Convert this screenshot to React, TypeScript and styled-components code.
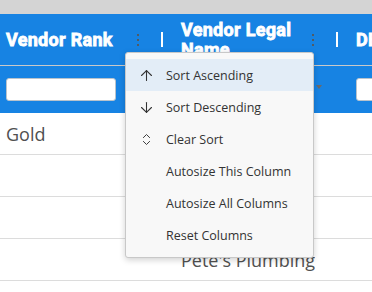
import React from "react";
import styled, { createGlobalStyle } from "styled-components";
import { ArrowUp, ArrowDown, ChevronsUpDown } from "lucide-react";

const Global = createGlobalStyle`
  html, body { margin: 0; padding: 0; background: #fff; }
  body { font-family: "Open Sans", "Noto Sans", sans-serif; }
`;

const Page = styled.div`
  position: relative;
  width: 372px;
  height: 292px;
  overflow: hidden;
  background: #fff;
`;

const TopStrip = styled.div`
  height: 14px;
  background: #d4d4d4;
`;

const GridRow = styled.div`
  display: grid;
  grid-template-columns: 175px 175px 175px;
`;

const HeaderRow = styled(GridRow)`
  height: 51px;
  background: #1783e3;
  border-bottom: 1px solid #c9c9c9;
`;

const HeaderCell = styled.div`
  display: flex;
  align-items: center;
  padding: 0 12px 0 6px;
`;

const HeaderLabel = styled.div`
  flex: 1;
  min-width: 0;
  color: #fff;
  font-family: Roboto, "Liberation Sans", sans-serif;
  font-weight: 700;
  font-size: 18px;
  line-height: 20px;
  letter-spacing: 0.3px;
  -webkit-text-stroke: 0.8px #fff;
  white-space: normal;
`;

const Dots = styled.svg`
  flex: none;
  margin-right: 21px;
`;

const Separator = styled.div`
  flex: none;
  width: 2px;
  height: 15px;
  background: #fff;
`;

const FilterRow = styled(GridRow)`
  height: 47px;
  background: #1783e3;
`;

const FilterCell = styled.div`
  position: relative;
  display: flex;
  align-items: center;
  padding: 0 6px;
`;

const FilterInput = styled.div`
  width: 108px;
  height: 21px;
  background: #fff;
  border: 1px solid #b9c3cc;
  border-radius: 3px;
`;

const Caret = styled.div`
  position: absolute;
  left: 141px;
  top: 19px;
  width: 0;
  height: 0;
  border-left: 3px solid transparent;
  border-right: 3px solid transparent;
  border-top: 4px solid #6a6a6a;
`;

const BodyRow = styled(GridRow)`
  height: 41px;
  border-bottom: 1px solid #dcdcdc;
`;

const BodyCell = styled.div`
  display: flex;
  align-items: center;
  min-width: 0;
  padding: 0 34px 0 6px;
  font-size: 18px;
  color: #505050;
`;

const CellText = styled.span`
  display: block;
  min-width: 0;
  white-space: nowrap;
  overflow: hidden;
  text-overflow: ellipsis;
`;

const Menu = styled.div`
  position: absolute;
  left: 125px;
  top: 52px;
  width: 187px;
  padding: 6px 0;
  background: #f8f8f8;
  border: 1px solid #c8c8c8;
  border-radius: 3px;
  box-shadow: 0 2px 6px rgba(0, 0, 0, 0.18);
`;

const MenuItem = styled.div<{ $active?: boolean }>`
  display: flex;
  align-items: center;
  height: 32px;
  padding-left: 11px;
  background: ${(p) => (p.$active ? "#e3edf7" : "transparent")};
  color: #333;
  font-family: "Open Sans", "Noto Sans", sans-serif;
  font-size: 12.5px;
`;

const IconBox = styled.span`
  flex: none;
  display: inline-flex;
  align-items: center;
  justify-content: center;
  width: 18px;
  height: 18px;
  margin-right: 11px;
  color: #333;
  & > svg {
    flex: none;
  }
`;

const DotsIcon = () => (
  <Dots width="4" height="12" viewBox="0 0 4 12">
    <rect x="1" y="0" width="2" height="2" fill="#4f5b66" />
    <rect x="1" y="5" width="2" height="2" fill="#4f5b66" />
    <rect x="1" y="10" width="2" height="2" fill="#4f5b66" />
  </Dots>
);

const columns = ["Vendor Rank", "Vendor Legal Name", "DBA Name"];

const rows = [
  ["Gold", "Acme Industrial Supply Company", ""],
  ["", "Smith Electrical Contractors Inc.", ""],
  ["", "", ""],
  ["", "Pete's Plumbing", ""],
];

const menuItems: { label: string; icon?: React.ReactNode; active?: boolean }[] = [
  { label: "Sort Ascending", icon: <ArrowUp size={17} strokeWidth={1.5} />, active: true },
  { label: "Sort Descending", icon: <ArrowDown size={17} strokeWidth={1.5} /> },
  { label: "Clear Sort", icon: <ChevronsUpDown size={15} strokeWidth={1.5} /> },
  { label: "Autosize This Column" },
  { label: "Autosize All Columns" },
  { label: "Reset Columns" },
];

export default function App() {
  return (
    <Page>
      <Global />
      <TopStrip />
      <HeaderRow>
        {columns.map((c) => (
          <HeaderCell key={c}>
            <HeaderLabel>{c}</HeaderLabel>
            <DotsIcon />
            <Separator />
          </HeaderCell>
        ))}
      </HeaderRow>
      <FilterRow>
        <FilterCell>
          <FilterInput />
        </FilterCell>
        <FilterCell>
          <FilterInput />
          <Caret />
        </FilterCell>
        <FilterCell>
          <FilterInput />
        </FilterCell>
      </FilterRow>
      {rows.map((r, i) => (
        <BodyRow key={i}>
          {r.map((v, j) => (
            <BodyCell key={j}>
              <CellText>{v}</CellText>
            </BodyCell>
          ))}
        </BodyRow>
      ))}
      <Menu>
        {menuItems.map((m) => (
          <MenuItem key={m.label} $active={m.active}>
            <IconBox>{m.icon}</IconBox>
            {m.label}
          </MenuItem>
        ))}
      </Menu>
    </Page>
  );
}
